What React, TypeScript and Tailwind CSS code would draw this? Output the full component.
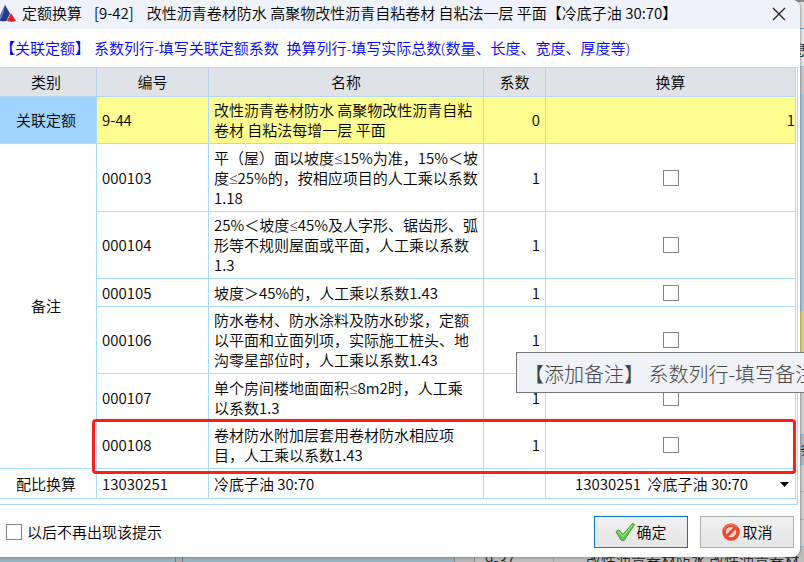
import { Fragment, useState } from "react";

type Note = {
  code: string;
  lines: string[];
  height: string;
  marked?: boolean;
};

const notes: Note[] = [
  { code: "000103", lines: ["平（屋）面以坡度≤15%为准，15%＜坡", "度≤25%的，按相应项目的人工乘以系数", "1.18"], height: "h-[68px]" },
  { code: "000104", lines: ["25%＜坡度≤45%及人字形、锯齿形、弧", "形等不规则屋面或平面，人工乘以系数", "1.3"], height: "h-[67px]" },
  { code: "000105", lines: ["坡度＞45%的，人工乘以系数1.43"], height: "h-[28px]" },
  { code: "000106", lines: ["防水卷材、防水涂料及防水砂浆，定额", "以平面和立面列项，实际施工桩头、地", "沟零星部位时，人工乘以系数1.43"], height: "h-[67px]" },
  { code: "000107", lines: ["单个房间楼地面面积≤8m2时，人工乘", "以系数1.3"], height: "h-[48px]" },
  { code: "000108", lines: ["卷材防水附加层套用卷材防水相应项", "目，人工乘以系数1.43"], height: "h-[47px]", marked: true },
];

const cell = "border-r border-b border-[#a9dbff] py-[3px]";
const head = "border-r border-b border-[#b4d6ec] bg-[#dfe2e7] font-[350]";
const box = "block size-4 appearance-none border border-[#858585] bg-white checked:bg-[#0078d7]";

// the CJK face has a full-width ≤, so that sign is set in a Latin face
function Lines({ lines }: { lines: string[] }) {
  return (
    <>
      {lines.map((line) => (
        <span key={line} className="block h-5 whitespace-nowrap">
          {line.split("≤").map((part, i) => (
            <Fragment key={i}>
              {i > 0 && <span className="font-['Open_Sans',sans-serif]">≤</span>}
              {part}
            </Fragment>
          ))}
        </span>
      ))}
    </>
  );
}

function Logo() {
  return (
    <svg className="h-[18px] w-4 shrink-0" viewBox="0 0 16 18" aria-hidden="true">
      <path d="M5 0L-2 15Q2 17 6.500 16L10 8.500Z" fill="#243c8c" />
      <path d="M5 0L3.500 8L0 15.500L-2 15Z" fill="#6d7ebc" />
      <path d="M11 8L7 16Q11.500 17.500 16 16Z" fill="#d9202b" />
    </svg>
  );
}

function Check() {
  return (
    <svg className="size-5" viewBox="0 0 20 20" aria-hidden="true">
      <path d="M1 9.500L4 8L8 12.500L17.500 1.500L19.500 2.500L9 18.500L6 18Z" fill="#62cf45" stroke="#3f8f35" strokeWidth="1" strokeLinejoin="round" />
      <path d="M3 10L4 9.500L8 14.500L17.500 3" fill="none" stroke="#a8ee8a" strokeWidth="1" />
    </svg>
  );
}

function Forbidden() {
  return (
    <svg className="size-5" viewBox="0 0 20 20" aria-hidden="true">
      <circle cx="10" cy="10" r="7" fill="#f6d5ce" stroke="#e9492b" strokeWidth="3.500" />
      <path d="M5.500 14.500L14.500 5.500" stroke="#e9492b" strokeWidth="3" />
      <path d="M3 8Q5 2.500 10 2.500Q14 2.500 16 5" fill="none" stroke="#f58a6d" strokeWidth="1" />
    </svg>
  );
}

// the main window that the dialog is opened over
function Backdrop() {
  return (
    <div className="absolute inset-0 flex flex-col text-[15px] leading-5 text-[#222]" aria-hidden="true">
      <div className="flex min-h-0 flex-1 justify-end">
        <div className="flex w-5 flex-col">
          <div className="h-7 border-t-2 border-[#8a8a8a] bg-[#e0e0e0]" />
          <div className="h-[38px] overflow-hidden border-t border-[#5f9cc5] bg-[#e6e6e6] pt-2.5 pl-2">息</div>
          <div className="h-[29px] border-y border-[#9fc6dc] bg-[#c4c6ca]" />
          <div className="h-[216px] bg-[#aac4d1]" />
          <div className="h-[43px] bg-[#d6d273]" />
          <div className="h-[80px] bg-[#d0d0d0]" />
          <div className="h-[31px] overflow-hidden border-y border-[#94b9ce] bg-[#b2b8c1] pt-1 pl-4">条</div>
          <div className="h-[27px] border-b border-[#94b9ce] bg-[#cecece]" />
          <div className="h-[28px] border-b border-[#94b9ce] bg-[#cecece]" />
          <div className="h-[27px] border-b border-[#94b9ce] bg-[#cecece]" />
        </div>
      </div>
      <div className="flex h-3.5 items-end overflow-hidden">
        <div className="h-full w-[175px] bg-[#98b2be]" />
        <div className="h-full w-2 border-x border-[#777] bg-[#a9a9a9]" />
        <div className="h-full w-[271px] bg-[#98b2be]" />
        <div className="h-full w-[21px] border-x border-[#888] bg-[#b5b5b5]" />
        <div className="h-full w-[79px] border-r border-[#86aec5] bg-[#bdbdbd] pl-2.5 leading-6">9-37</div>
        <div className="h-full flex-1 overflow-hidden bg-[#bdbdbd] pl-8 leading-6 whitespace-nowrap">改性沥青卷材防水 改性沥青卷材</div>
      </div>
    </div>
  );
}

export default function App() {
  const [checked, setChecked] = useState<string[]>([]);
  const [hideNext, setHideNext] = useState(false);

  const toggle = (code: string) => {
    setChecked(checked.includes(code) ? checked.filter((c) => c !== code) : [...checked, code]);
  };

  return (
    <div className="relative h-screen overflow-hidden bg-[#bdbdbd] font-['Noto_Sans_CJK_SC',sans-serif] font-[350] text-black">
      <Backdrop />

      <div role="dialog" aria-label="定额换算" className="relative mr-1 rounded-r-lg bg-white pb-[9px] text-[15px] leading-5 shadow-[0_0_3px_#666]">
        <header className="flex h-[29px] items-center rounded-tr-lg bg-[#eff2fa] pr-3.5 pb-0.5">
          <Logo />
          <h1 className="ml-1.5 flex-1 pb-0.5 font-[350] whitespace-pre">
            <span>定额换算</span>
            <span className="ml-3">[9-42]</span>
            <span className="ml-[13px]">改性沥青卷材防水 高聚物改性沥青自粘卷材 自粘法一层 平面【冷底子油 30:70】</span>
          </h1>
          <button type="button" aria-label="关闭">
            <svg className="size-3.5" viewBox="0 0 14 14">
              <path d="M1 1L13 13M13 1L1 13" stroke="#222" strokeWidth="1.300" />
            </svg>
          </button>
        </header>

        <p className="flex h-[38px] items-center font-['Open_Sans','Noto_Sans_CJK_SC',sans-serif] whitespace-pre text-[#0000ff]">【关联定额】 系数列行-填写关联定额系数  换算列行-填写实际总数(数量、长度、宽度、厚度等)</p>

        <div className="mr-0.5 border-t border-r border-b border-[#a9dbff] pr-px pb-[5px]">
          <table className="w-full table-fixed border-separate border-spacing-0">
            <colgroup>
              <col className="w-[97px]" />
              <col className="w-[112px]" />
              <col className="w-[275px]" />
              <col className="w-[62px]" />
              <col />
            </colgroup>
            <thead>
              <tr className="h-[29px]">
                <th className={`${head} pr-1`}>类别</th>
                <th className={head}>编号</th>
                <th className={head}>名称</th>
                <th className={head}>系数</th>
                <th className={head}>换算</th>
              </tr>
            </thead>
            <tbody>
              <tr className="h-[47px] bg-[#ffff91]">
                <td className={`${cell} bg-[#9fd4ff] pr-1 text-center`}>关联定额</td>
                <td className={`${cell} pl-[5px]`}>9-44</td>
                <td className={`${cell} pl-[5px]`}>
                  <Lines lines={["改性沥青卷材防水 高聚物改性沥青自粘", "卷材 自粘法每增一层 平面"]} />
                </td>
                <td className={`${cell} pr-[5px] text-right`}>0</td>
                <td className={`${cell} text-right`}>1</td>
              </tr>
              {notes.map((note, i) => (
                <tr key={note.code} className={`${note.height} relative`}>
                  {i === 0 && (
                    <td rowSpan={notes.length} className={`${cell} pr-1 text-center`}>备注</td>
                  )}
                  <td className={`${cell} pl-[5px]`}>{note.code}</td>
                  <td className={`${cell} pl-[5px]`}>
                    <Lines lines={note.lines} />
                  </td>
                  <td className={`${cell} pr-[5px] text-right`}>1</td>
                  <td className={cell}>
                    <input
                      type="checkbox"
                      aria-label={note.code}
                      checked={checked.includes(note.code)}
                      onChange={() => toggle(note.code)}
                      className={`${box} mx-auto`}
                    />
                    {note.marked && (
                      <span className="pointer-events-none absolute -top-[3px] right-0 -bottom-[5px] left-[92px] rounded-sm border-3 border-[#ff1e10]" />
                    )}
                  </td>
                </tr>
              ))}
              <tr className="h-[30px]">
                <td className={`${cell} pr-1 text-center`}>配比换算</td>
                <td className={`${cell} pl-[5px]`}>13030251</td>
                <td className={`${cell} pl-[5px]`}>冷底子油 30:70</td>
                <td className={cell} />
                <td className={cell}>
                  <div className="relative">
                    <select aria-label="配比换算" className="block h-5 w-full appearance-none bg-transparent pr-[18px] text-center">
                      <option>{"13030251\u00a0\u00a0冷底子油 30:70"}</option>
                    </select>
                    <svg className="pointer-events-none absolute top-2 right-1.5 h-[5px] w-[9px]" viewBox="0 0 9 5">
                      <path d="M0 0H9L4.500 5Z" fill="#000" />
                    </svg>
                  </div>
                </td>
              </tr>
            </tbody>
          </table>
        </div>

        <footer className="flex items-center gap-3 pt-[11px] pr-1.5 pl-1.5">
          <label className="mr-auto flex items-center gap-[5px]">
            <input type="checkbox" checked={hideNext} onChange={(e) => setHideNext(e.target.checked)} className={box} />
            以后不再出现该提示
          </label>
          <button type="button" className="flex h-8 w-[94px] items-center justify-center gap-px border border-[#0078d7] bg-linear-to-b from-[#f0f0f0] to-[#e5e5e5]">
            <Check />
            确定
          </button>
          <button type="button" className="flex h-8 w-[94px] items-center justify-center gap-px border border-[#adadad] bg-linear-to-b from-[#f0f0f0] to-[#e5e5e5]">
            <Forbidden />
            取消
          </button>
        </footer>
      </div>

      <div role="tooltip" className="absolute top-[352px] left-[516px] h-[41px] w-[300px] overflow-hidden border border-[#767676] bg-[#f1f2f7] pt-px pl-[7px] text-[20px] leading-10 font-light whitespace-pre text-[#444]">【添加备注】 系数列行-填写备注</div>
    </div>
  );
}
